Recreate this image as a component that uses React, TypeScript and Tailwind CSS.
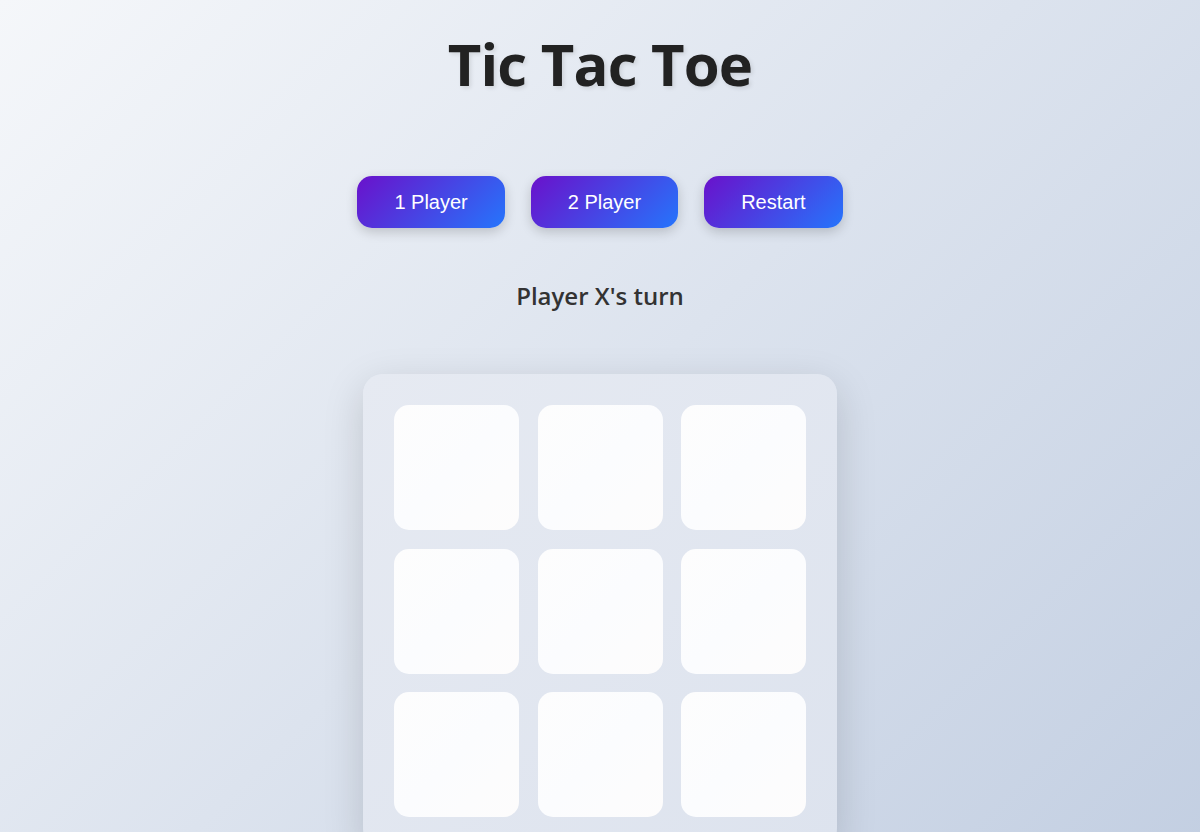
export default function App() {
  const cells = Array.from({ length: 9 });
  const buttons = ["1 Player", "2 Player", "Restart"];

  return (
    <div className="min-h-screen bg-[linear-gradient(135deg,#f5f7fa_0%,#c3cfe2_100%)] flex flex-col items-center overflow-hidden">
      {/* Title */}
      <h1 className="mt-[26px] text-[58px] leading-[76px] font-bold tracking-[-0.8px] text-[#222] font-['Open_Sans',sans-serif] [text-shadow:2px_2px_4px_rgba(0,0,0,0.1)]">
        Tic Tac Toe
      </h1>

      {/* Mode buttons */}
      <div className="mt-[74px] flex gap-[26px]">
        {buttons.map((label) => (
          <button
            key={label}
            className="h-[52px] px-[37px] rounded-[15px] bg-[linear-gradient(135deg,#6a11cb_0%,#2575fc_100%)] text-white text-[20px] font-['Liberation_Sans',Arial,sans-serif] shadow-[0_4px_12px_rgba(0,0,0,0.18)]"
          >
            {label}
          </button>
        ))}
      </div>

      {/* Status */}
      <p className="mt-[52px] text-[24px] leading-[32px] font-semibold text-[#333] font-['Open_Sans',sans-serif]">
        Player X's turn
      </p>

      {/* Board */}
      <div className="mt-[62px] p-[31px] rounded-[20px] bg-[linear-gradient(135deg,#e6eaf2_0%,#dde3ee_100%)] shadow-[0_12px_40px_rgba(0,0,0,0.15)] grid grid-cols-[repeat(3,125px)] gap-[18.5px]">
        {cells.map((_, i) => (
          <div
            key={i}
            className="w-[125px] h-[125px] rounded-[15px] bg-[linear-gradient(135deg,#fdfdfd_0%,#fbfcfe_50%,#fdfcfc_100%)]"
          />
        ))}
      </div>
    </div>
  );
}
